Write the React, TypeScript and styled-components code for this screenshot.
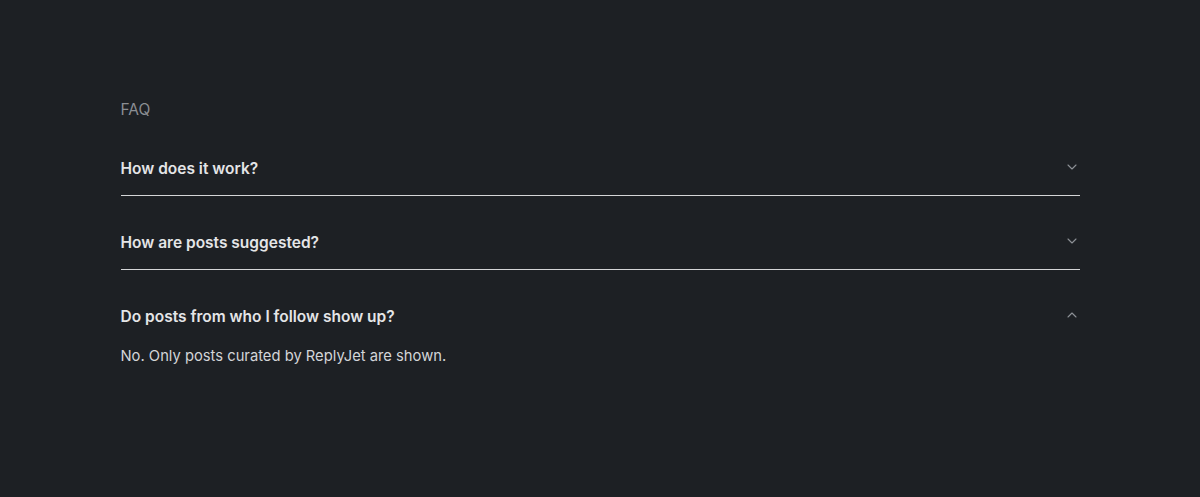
import { useState } from "react";
import styled, { createGlobalStyle } from "styled-components";
import { ChevronDown, ChevronUp } from "lucide-react";

const GlobalStyle = createGlobalStyle`
  html, body {
    margin: 0;
    padding: 0;
    background: #1d2024;
  }
  body {
    font-family: Inter, "Liberation Sans", sans-serif;
    -webkit-font-smoothing: antialiased;
  }
`;

const faqs = [
  { q: "How does it work?", a: "ReplyJet finds posts worth replying to and drafts replies for you." },
  { q: "How are posts suggested?", a: "Posts are picked based on the topics and keywords you choose." },
  { q: "Do posts from who I follow show up?", a: "No. Only posts curated by ReplyJet are shown." },
];

export default function App() {
  const [open, setOpen] = useState(2);

  return (
    <>
      <GlobalStyle />
      <Page>
        <Section>
          <Label>FAQ</Label>
          {faqs.map((item, i) => (
            <Item key={item.q} $open={open === i}>
              <Question onClick={() => setOpen(open === i ? -1 : i)}>
                <span>{item.q}</span>
                <Icon>
                  {open === i ? (
                    <ChevronUp size={16} strokeWidth={1.6} />
                  ) : (
                    <ChevronDown size={16} strokeWidth={1.6} />
                  )}
                </Icon>
              </Question>
              {open === i ? <Answer>{item.a}</Answer> : null}
            </Item>
          ))}
        </Section>
      </Page>
    </>
  );
}

const Page = styled.div`
  width: 1200px;
  height: 497px;
  background: #1d2024;
  display: flex;
  justify-content: center;
`;

const Section = styled.div`
  width: 959px;
  padding-top: 101px;
  display: flex;
  flex-direction: column;
`;

const Label = styled.div`
  color: #8b8e93;
  font-size: 15.5px;
  line-height: 18px;
  margin-bottom: 3px;
`;

const Item = styled.div<{ $open: boolean }>`
  border-bottom: ${(p) => (p.$open ? "none" : "1px solid #d4d5d7")};
`;

const Question = styled.button`
  width: 100%;
  display: flex;
  justify-content: space-between;
  align-items: center;
  background: none;
  border: none;
  outline: none;
  padding: 35px 0 14px;
  margin: 0;
  cursor: pointer;
  color: #e4e5e7;
  font-family: Inter, "Liberation Sans", sans-serif;
  font-size: 15.5px;
  font-weight: 600;
  line-height: 24px;
  text-align: left;
`;

const Icon = styled.span`
  display: flex;
  color: #8e9196;
  margin-top: -5px;
`;

const Answer = styled.p`
  margin: 1px 0 0;
  color: #d3d5d8;
  font-size: 14.75px;
  line-height: 24px;
`;
